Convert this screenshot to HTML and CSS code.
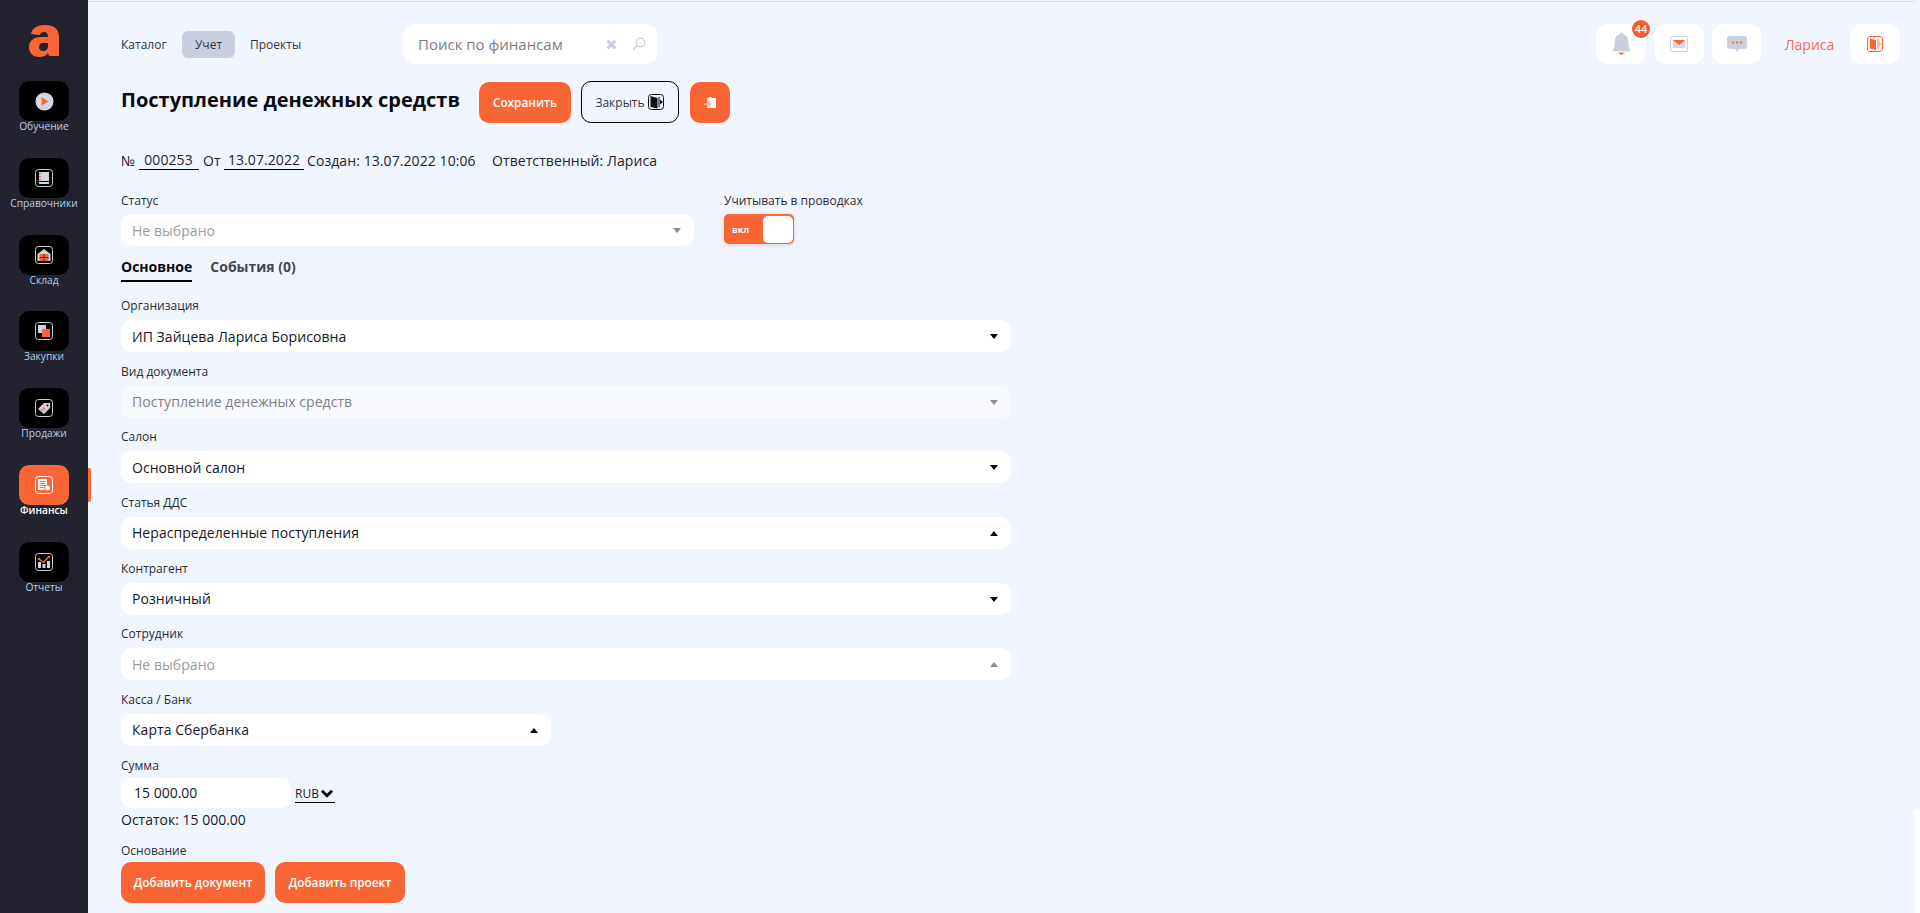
FILE: index.html
```html
<!DOCTYPE html>
<html lang="ru">
<head>
<meta charset="utf-8">
<title>Поступление денежных средств</title>
<link rel="stylesheet" href="styles.css">
</head>
<body>
<aside class="side">
  <svg class="logo" viewBox="0 0 30 32"><path fill="#fa6535" fill-rule="evenodd" d="M2 9C3 3 9 0 16 0c9 0 14 4 14 12v19H20l-1-3c-2 3-6 4-9 4-6 0-10-4-10-10 0-7 6-10 12-10h7c0-3-1-5-4-5-2 0-4 1-4 3zM19 18h-5c-3 0-4 2-4 4 0 3 2 4 4 4 3 0 5-2 5-5z"/></svg>
  <nav class="nav">
    <a class="nav-item"><span class="tile"><svg class="ic-play" viewBox="0 0 20 20"><circle cx="10" cy="10" r="9.5" fill="#d3d6e0"/><path d="M7 5.5l7 4.500-7 4.500z" fill="#fa6535"/></svg></span><span class="nav-label">Обучение</span></a>
    <a class="nav-item"><span class="tile"><svg class="ic" viewBox="0 0 18 18"><rect x=".5" y=".5" width="17" height="17" rx="3" fill="none" stroke="#c9cdd8"/><path d="M4 3h10v9H4z" fill="#d3d6e0"/><path d="M4 13h10v2H4z" fill="#d3d6e0"/><path d="M5 4v1M5 7v1M5 10v1" stroke="#fa6535" stroke-width="2"/></svg></span><span class="nav-label">Справочники</span></a>
    <a class="nav-item"><span class="tile"><svg class="ic" viewBox="0 0 18 18"><rect x=".5" y=".5" width="17" height="17" rx="3" fill="none" stroke="#c9cdd8"/><path d="M2.500 8L9 3l6.500 5v7h-13z" fill="#d3d6e0"/><path d="M4.500 8h9v7h-9z" fill="#fa6535"/><path d="M4.500 11.500h9M9 8v7" stroke="#222" stroke-width=".8"/></svg></span><span class="nav-label">Склад</span></a>
    <a class="nav-item"><span class="tile"><svg class="ic" viewBox="0 0 18 18"><rect x=".5" y=".5" width="17" height="17" rx="3" fill="none" stroke="#c9cdd8"/><path d="M3 3h8v8H3z" fill="#d3d6e0"/><path d="M7 7h8v8H7z" fill="#fa6535"/></svg></span><span class="nav-label">Закупки</span></a>
    <a class="nav-item"><span class="tile"><svg class="ic" viewBox="0 0 18 18"><rect x=".5" y=".5" width="17" height="17" rx="3" fill="none" stroke="#c9cdd8"/><path d="M3 10l6-6h6v5l-6 6z" fill="#d3d6e0"/><circle cx="12.500" cy="6.500" r="1" fill="#000"/><path d="M6 10l2 2M8 8.500l2 2" stroke="#fa6535" stroke-width="1.300"/></svg></span><span class="nav-label">Продажи</span></a>
    <a class="nav-item active"><span class="tile"><svg class="ic" viewBox="0 0 18 18"><rect x=".5" y=".5" width="17" height="17" rx="3" fill="none" stroke="#fff"/><path d="M3 3h9v11H3z" fill="#fff"/><path d="M4.500 5.500h6M4.500 7.500h6M4.500 9.500h6M4.500 11.500h4" stroke="#fa6535"/><circle cx="12.500" cy="12" r="3" fill="#fff" stroke="#fa6535"/></svg></span><span class="nav-label">Финансы</span></a>
    <a class="nav-item"><span class="tile"><svg class="ic" viewBox="0 0 18 18"><rect x=".5" y=".5" width="17" height="17" rx="3" fill="none" stroke="#c9cdd8"/><path d="M3 9h3v6H3zM7.500 11h3v4h-3zM12 8h3v7h-3z" fill="#d3d6e0"/><path d="M4 6l4.500 3.500L14 3.500" fill="none" stroke="#fa6535" stroke-width="1.300"/><circle cx="4" cy="6" r="1.300" fill="#fa6535"/><circle cx="14" cy="4" r="1.300" fill="#fa6535"/></svg></span><span class="nav-label">Отчеты</span></a>
  </nav>
</aside>

<main class="main">
  <header class="top">
    <div class="tabs-top">
      <a class="top-link">Каталог</a>
      <a class="top-link current">Учет</a>
      <a class="top-link">Проекты</a>
    </div>
    <div class="search">
      <span class="search-text">Поиск по финансам</span>
      <svg class="search-x" viewBox="0 0 10 10"><path d="M1.500 1.500l7 7M8.500 1.500l-7 7" stroke="#c9cfdc" stroke-width="3"/></svg>
      <svg class="search-lens" viewBox="0 0 14 14"><circle cx="8.500" cy="5.500" r="4.300" fill="none" stroke="#c9cfdc" stroke-width="1.300"/><path d="M5.500 8.500L1 13" stroke="#c9cfdc" stroke-width="1.500"/></svg>
    </div>
    <div class="top-right">
      <div class="tool bell">
        <svg class="ic-bell" viewBox="0 0 20 24"><path d="M10 0a2 2 0 0 1 2 2c4 1 5 4 5 8 0 4 1 7 3 9.500H0c2-2.500 3-5.500 3-9.500 0-4 1-7 5-8a2 2 0 0 1 2-2z" fill="#c9cfdc"/><path d="M6 21h8l-4 2.500z" fill="#fa6535"/></svg>
        <span class="badge">44</span>
      </div>
      <div class="tool"><svg class="ic-mail" viewBox="0 0 18 16"><rect x=".5" y=".5" width="17" height="15" rx="2" fill="none" stroke="#c9cfdc"/><path d="M3 4h12v8H3z" fill="#d3d8e4"/><path d="M3 4h12L9 9z" fill="#fa6535"/></svg></div>
      <div class="tool"><svg class="ic-chat" viewBox="0 0 20 16"><path d="M3 0h14a3 3 0 0 1 3 3v7a3 3 0 0 1-3 3h-5l-2 3-2-3H3a3 3 0 0 1-3-3V3a3 3 0 0 1 3-3z" fill="#c9cfdc"/><circle cx="6" cy="6.500" r="1.100" fill="#fa6535"/><circle cx="10" cy="6.500" r="1.100" fill="#fa6535"/><circle cx="14" cy="6.500" r="1.100" fill="#fa6535"/></svg></div>
      <span class="user">Лариса</span>
      <div class="tool"><svg class="ic-door" viewBox="0 0 16 16"><rect x=".5" y=".5" width="15" height="15" rx="2.500" fill="none" stroke="#fa6535"/><path d="M3 2.500l6 1.500v10l-6-1.500z" fill="#fa6535"/><path d="M10 3h2v10h-2z" fill="#f9b7a0"/><path d="M12 5.500L15 8l-3 2.500z" fill="#c9cfdc"/></svg></div>
    </div>
  </header>

  <div class="title-row">
    <h1 class="title">Поступление денежных средств</h1>
    <button class="btn save">Сохранить</button>
    <button class="btn close">Закрыть<svg class="ic-close" viewBox="0 0 16 16"><rect x=".5" y=".5" width="15" height="15" rx="3" fill="none" stroke="#111"/><path d="M2.500 2l7 2v10.500l-7-1.500z" fill="#111"/><path d="M10 3h2v10h-2z" fill="#777"/><path d="M12 5.500L15 8l-3 2.500z" fill="#111"/></svg></button>
    <button class="btn square"><svg class="ic-clip" viewBox="0 0 12 11"><path d="M3 1h2a1.500 1.500 0 0 1 3 0h3a1 1 0 0 1 1 1v8a1 1 0 0 1-1 1H3z" fill="#fff"/><path d="M0 7h5.500M3.500 5l2 2-2 2" fill="none" stroke="#fa6535" stroke-width="2.400"/><path d="M0 7h5.500M3.500 5l2 2-2 2" fill="none" stroke="#fff"/></svg></button>
  </div>

  <div class="meta">
    <span class="no">№</span>
    <span class="ul num">000253</span>
    <span class="from">От</span>
    <span class="ul date">13.07.2022</span>
    <span class="created">Создан: 13.07.2022 10:06</span>
    <span class="owner">Ответственный: Лариса</span>
  </div>

  <div class="status-row">
    <div class="status-col">
      <label class="lbl">Статус</label>
      <div class="select muted"><span>Не выбрано</span><i class="caret down grey"></i></div>
    </div>
    <div class="post-col">
      <label class="lbl">Учитывать в проводках</label>
      <div class="toggle"><span class="toggle-text">вкл</span><span class="knob"></span></div>
    </div>
  </div>

  <div class="tabs">
    <a class="tab on">Основное</a>
    <a class="tab">События (0)</a>
  </div>

  <div class="form">
    <div class="field"><label class="lbl">Организация</label><div class="select"><span>ИП Зайцева Лариса Борисовна</span><i class="caret down"></i></div></div>
    <div class="field"><label class="lbl">Вид документа</label><div class="select off"><span>Поступление денежных средств</span><i class="caret down grey"></i></div></div>
    <div class="field"><label class="lbl">Салон</label><div class="select"><span>Основной салон</span><i class="caret down"></i></div></div>
    <div class="field"><label class="lbl">Статья ДДС</label><div class="select"><span>Нераспределенные поступления</span><i class="caret up"></i></div></div>
    <div class="field"><label class="lbl">Контрагент</label><div class="select"><span>Розничный</span><i class="caret down"></i></div></div>
    <div class="field"><label class="lbl">Сотрудник</label><div class="select muted"><span>Не выбрано</span><i class="caret up grey"></i></div></div>
    <div class="field narrow"><label class="lbl">Касса / Банк</label><div class="select"><span>Карта Сбербанка</span><i class="caret up"></i></div></div>
    <div class="sum">
      <label class="lbl">Сумма</label>
      <div class="sum-row">
        <div class="sum-input">15 000.00</div>
        <div class="currency">RUB<svg class="chev" viewBox="0 0 12 8"><path d="M1.500 1.500L6 6l4.500-4.500" fill="none" stroke="#000" stroke-width="2.600"/></svg></div>
      </div>
      <div class="rest">Остаток: 15 000.00</div>
    </div>
    <div class="basis">
      <label class="lbl">Основание</label>
      <div class="basis-btns">
        <button class="btn doc">Добавить документ</button>
        <button class="btn proj">Добавить проект</button>
      </div>
    </div>
  </div>
  <div class="edge"></div>
</main>
</body>
</html>
```

FILE: styles.css
```css
* { box-sizing: border-box; }
html, body { height: 100%; }
body {
  margin: 0;
  display: flex;
  height: 913px;
  overflow: hidden;
  background: #f1f6fe;
  font-family: "Open Sans", "Noto Sans", sans-serif;
  color: #1a1a22;
}

/* sidebar */
.side {
  width: 88px;
  flex: none;
  background: #22232e;
  display: flex;
  flex-direction: column;
  align-items: center;
  padding-top: 25px;
}
.logo { width: 30px; height: 32px; display: block; }
.nav { display: flex; flex-direction: column; margin-top: 24px; align-self: stretch; }
.nav-item {
  position: relative;
  height: 76.83px;
  display: flex;
  flex-direction: column;
  align-items: center;
}
.tile {
  flex: none;
  width: 50px;
  height: 40px;
  border-radius: 10px;
  background: #000;
  display: flex;
  align-items: center;
  justify-content: center;
}
.nav-label { font-size: 10.2px; line-height: 15px; margin-top: -2px; color: #b9cbe6; }
.nav-item.active .tile { background: #fa6535; }
.nav-item.active .nav-label { color: #fff; font-weight: 600; }
.nav-item.active::after {
  content: "";
  position: absolute;
  left: 88px;
  top: 3px;
  width: 3px;
  height: 34px;
  background: #fa6535;
  border-radius: 0 2px 2px 0;
}
.ic { width: 18px; height: 18px; }
.ic-play { width: 19px; height: 19px; }

/* main */
.main { position: relative; flex: 1; min-width: 0; padding: 24px 20px 0 33px; }
.main::before {
  content: "";
  position: absolute;
  left: 0;
  right: 5px;
  top: 1px;
  height: 1px;
  background: #dde0ea;
}
.top { display: flex; align-items: center; height: 40px; }
.tabs-top { display: flex; align-items: center; width: 282px; font-size: 12px; }
.top-link { height: 27px; line-height: 27px; color: #33343f; }
.top-link:first-child { width: 61px; }
.top-link.current { width: 53px; text-align: center; background: #c9cfdf; border-radius: 6px; margin-right: 15px; }
.search {
  width: 255px;
  height: 40px;
  background: #fff;
  border-radius: 12px;
  display: flex;
  align-items: center;
  padding-left: 15px;
  color: #7b7d86;
  font-size: 15px;
}
.search-text { flex: 1; }
.search-x { width: 11px; height: 11px; margin-right: 15px; }
.search-lens { width: 14px; height: 14px; margin-right: 12px; }
.top-right { margin-left: auto; display: flex; align-items: center; }
.tool {
  position: relative;
  width: 50px;
  height: 40px;
  background: #fff;
  border-radius: 12px;
  display: flex;
  align-items: center;
  justify-content: center;
  margin-right: 8px;
}
.ic-bell { width: 19px; height: 24px; }
.badge {
  position: absolute;
  right: -4px;
  top: -4px;
  width: 18px;
  height: 18px;
  border-radius: 50%;
  background: #fa5a28;
  color: #fff;
  font-size: 11px;
  font-weight: 600;
  line-height: 18px;
  text-align: center;
}
.ic-mail { width: 18px; height: 16px; }
.ic-chat { width: 20px; height: 16px; }
.ic-door { width: 16px; height: 16px; }
.user { color: #fa6a50; font-size: 14px; width: 72px; text-align: center; margin: 0 8px 0 0; padding-left: 7px; }
.tool:last-child { margin-right: 0; }

.title-row { display: flex; align-items: center; margin-top: 17px; height: 42px; }
.title { margin: 0 0 4px; width: 358px; font-size: 20px; line-height: 28px; font-weight: 700; color: #0a0a12; white-space: nowrap; }
.btn {
  font-family: inherit;
  border: 0;
  background: #fa6535;
  color: #fff;
  height: 41px;
  border-radius: 10px;
  font-size: 11.8px;
  font-weight: 600;
  padding: 0;
  display: inline-flex;
  align-items: center;
  justify-content: center;
}
.save { width: 92px; margin-right: 10px; }
.close { width: 98px; height: 42px; background: transparent; color: #33343f; border: 1px solid #000; font-size: 12px; font-weight: 400; gap: 3px; padding-right: 1px; margin-right: 11px; }
.ic-close { width: 16px; height: 16px; }
.square { width: 40px; }
.ic-clip { width: 12px; height: 11px; }

.meta { display: flex; align-items: flex-end; margin-top: 26px; height: 21px; font-size: 14px; line-height: 19px; letter-spacing: .08px; color: #23232d; }
.meta span { white-space: nowrap; }
.no { width: 18px; }
.ul { border-bottom: 1px solid #000; height: 20px; text-align: center; }
.num { width: 60px; padding-right: 1px; }
.from { margin-left: 4px; width: 21px; }
.date { width: 80px; }
.created { margin-left: 3px; width: 185px; }

.lbl { display: block; position: relative; top: 1px; font-size: 12px; line-height: 16px; color: #2b2b35; white-space: nowrap; }
.status-row { display: flex; margin-top: 22px; }
.status-col { width: 573px; margin-right: 30px; }
.post-col { width: 200px; }
.status-col .lbl, .post-col .lbl { margin-bottom: 6px; }

.select {
  position: relative;
  height: 32px;
  background: #fff;
  border-radius: 10px;
  display: flex;
  align-items: center;
  padding-left: 11px;
  font-size: 14px;
  letter-spacing: .05px;
  color: #17171f;
}
.select.muted { color: #9a9a9f; }
.select.off { background: #f8fafe; color: #7d7e86; }
.caret { position: absolute; right: 13px; top: 14px; width: 0; height: 0; border-left: 4px solid transparent; border-right: 4px solid transparent; }
.caret.down { border-top: 5px solid #000; }
.caret.up { border-bottom: 5px solid #000; }
.caret.down.grey { border-top-color: #8d8d92; }
.caret.up.grey { border-bottom-color: #8d8d92; }

.toggle {
  width: 70px;
  height: 30px;
  background: #fa6535;
  border-radius: 5px;
  display: flex;
  align-items: center;
  justify-content: space-between;
  padding: 0 1px 0 8px;
  box-shadow: 0 1px 4px rgba(90, 60, 50, .2);
}
.toggle-text { font-size: 9px; font-weight: 700; color: #fff; }
.knob { width: 30px; height: 27px; background: #fff; border-radius: 5px; }

.tabs { display: flex; margin-top: 10px; gap: 18px; height: 26px; }
.tab { font-size: 14px; font-weight: 700; line-height: 20px; color: #45464f; padding-top: 1px; }
.tab.on { color: #0a0a12; border-bottom: 2px solid #000; }

.form { margin-top: 15px; }
.field { width: 890px; height: 65.67px; }
.field .lbl { margin-bottom: 7px; height: 16px; }
.field.narrow { width: 430px; }
.sum .lbl { margin-bottom: 5px; }
.sum-row { display: flex; align-items: flex-start; }
.sum-input { width: 170px; height: 30px; background: #fff; border-radius: 10px; padding-left: 13px; font-size: 14px; line-height: 30px; color: #17171f; }
.currency { display: flex; align-items: center; margin: 7px 0 0 4px; width: 40px; height: 18px; border-bottom: 1px solid #000; font-size: 12px; color: #23232d; }
.chev { width: 14px; height: 9px; margin-left: 1px; }
.rest { font-size: 14px; line-height: 19px; color: #1a1a22; margin-top: 2px; }
.basis { margin-top: 13px; }
.basis .lbl { margin-bottom: 4px; }
.basis-btns { display: flex; gap: 10px; }
.doc { width: 144px; }
.proj { width: 130px; }
.edge { position: absolute; right: 0; top: 809px; bottom: 0; width: 5px; background: #fff; }
```
